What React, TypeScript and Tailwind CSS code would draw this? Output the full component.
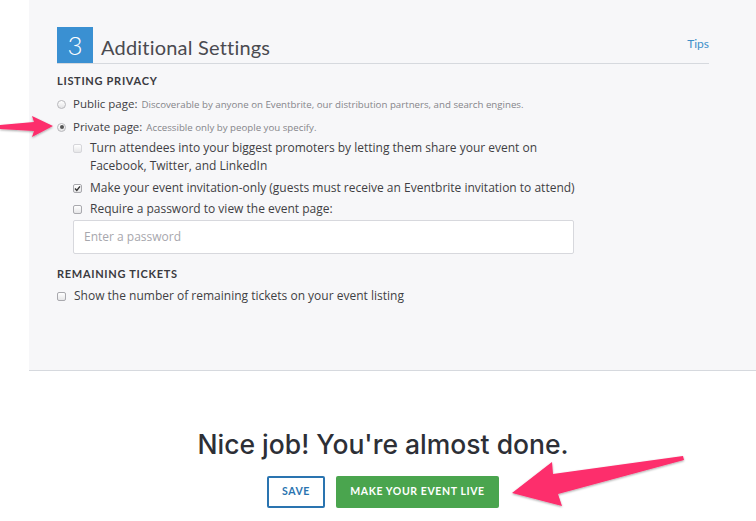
function Radio({ checked }: { checked?: boolean }) {
  return (
    <span className="w-[9px] h-[9px] rounded-full border border-[#b8b8bc] bg-gradient-to-b from-white to-[#e4e4e6] flex items-center justify-center shrink-0">
      {checked && <span className="w-[4px] h-[4px] rounded-full bg-[#555]" />}
    </span>
  );
}

function Check({ checked, faded }: { checked?: boolean; faded?: boolean }) {
  return (
    <span
      className={
        "w-[9px] h-[9px] rounded-[2px] border bg-gradient-to-b from-white to-[#e6e6e8] flex items-center justify-center shrink-0 " +
        (faded ? "border-[#d6d6da]" : "border-[#a9a9ae]")
      }
    >
      {checked && (
        <svg width="7" height="7" viewBox="0 0 7 7">
          <path d="M1 3.6 L2.8 5.4 L6 1.4" fill="none" stroke="#333" strokeWidth="1.4" />
        </svg>
      )}
    </span>
  );
}

function Arrows() {
  return (
    <svg className="absolute inset-0 pointer-events-none" width="756" height="521" viewBox="0 0 756 521">
      <defs>
        <filter id="sh" x="-10%" y="-30%" width="120%" height="160%">
          <feDropShadow dx="0" dy="1" stdDeviation="1" floodColor="#000" floodOpacity="0.35" />
        </filter>
      </defs>
      <polygon
        points="0,125 34,122 32,116 53,126 32,137 34,131 0,129"
        fill="#fd2d6c"
        filter="url(#sh)"
      />
      <polygon
        points="683,456 684,460 558,494 562,506 512,493 552,462 553,474"
        fill="#fd2d6c"
        filter="url(#sh)"
      />
    </svg>
  );
}

export default function App() {
  return (
    <div className="relative w-[756px] h-[521px] bg-white overflow-hidden font-['Open_Sans',sans-serif] text-[#3f3f44]">
      <div className="ml-[29px] h-[371px] bg-[#f7f7f9] border-b border-[#d6d9de] pl-[28px] pr-[47px] pt-[27px]">
        <div className="flex items-end border-b border-[#d6d9de] h-[37px]">
          <div className="w-[36px] h-[36px] bg-[#3a90d2] text-white text-[26px] leading-[36px] text-center font-light font-['Lato',sans-serif]">
            3
          </div>
          <div className="ml-[8px] text-[20px] leading-[24px] mb-[4px] text-[#4a4a50] tracking-[0.2px] font-['Lato',sans-serif]">
            Additional Settings
          </div>
          <a className="ml-auto text-[12px] leading-[14px] mb-[12px] text-[#3d8fca] font-['Lato',sans-serif]">Tips</a>
        </div>

        <div className="mt-[10px] text-[11px] leading-[14px] font-bold tracking-[0.7px] text-[#3a3a3f] font-['Lato',sans-serif]">
          LISTING PRIVACY
        </div>
        <div className="mt-[7px] flex items-center h-[18px]">
          <Radio />
          <span className="ml-[7px] text-[11.5px]">Public page:</span>
          <span className="ml-[4px] text-[9.7px] text-[#85858a] mt-[2px]">
            Discoverable by anyone on Eventbrite, our distribution partners, and search engines.
          </span>
        </div>
        <div className="mt-[5px] flex items-center h-[18px]">
          <Radio checked />
          <span className="ml-[7px] text-[11.5px]">Private page:</span>
          <span className="ml-[4px] text-[9.7px] text-[#85858a] mt-[2px]">Accessible only by people you specify.</span>
        </div>

        <div className="ml-[16px]">
          <div className="mt-[3px] flex text-[12px] leading-[18px]">
            <span className="mt-[5px]">
              <Check faded />
            </span>
            <span className="ml-[8px] w-[470px]">
              Turn attendees into your biggest promoters by letting them share your event on Facebook, Twitter, and LinkedIn
            </span>
          </div>
          <div className="mt-[4px] flex items-center text-[12px] leading-[18px]">
            <Check checked />
            <span className="ml-[8px]">
              Make your event invitation-only (guests must receive an Eventbrite invitation to attend)
            </span>
          </div>
          <div className="mt-[3px] flex items-center text-[12px] leading-[18px]">
            <Check />
            <span className="ml-[8px]">Require a password to view the event page:</span>
          </div>
          <div className="mt-[2px] w-[501px] h-[34px] bg-white border border-[#d7d8dd] rounded-[2px] px-[10px] flex items-center text-[12px] text-[#a7a7ad]">
            Enter a password
          </div>
        </div>

        <div className="mt-[13px] text-[11px] leading-[14px] font-bold tracking-[0.7px] text-[#3a3a3f] font-['Lato',sans-serif]">
          REMAINING TICKETS
        </div>
        <div className="mt-[6px] flex items-center text-[12px] leading-[18px]">
          <Check />
          <span className="ml-[8px]">Show the number of remaining tickets on your event listing</span>
        </div>
      </div>

      <div className="pl-[10px] flex flex-col items-center">
        <div className="mt-[56px] text-[26.5px] leading-[34px] font-medium text-[#2d2f36] font-['Inter',sans-serif]">
          Nice job! You're almost done.
        </div>
        <div className="mt-[15px] flex gap-[11px] font-['Lato',sans-serif]">
          <button className="w-[58px] h-[32px] border-2 border-[#2a74b0] rounded-[2px] text-[#2a74b0] text-[10.5px] font-bold tracking-[0.6px]">
            SAVE
          </button>
          <button className="w-[163px] h-[32px] bg-[#4aa54e] rounded-[2px] text-white text-[10.5px] font-bold tracking-[0.6px]">
            MAKE YOUR EVENT LIVE
          </button>
        </div>
      </div>

      <Arrows />
    </div>
  );
}
